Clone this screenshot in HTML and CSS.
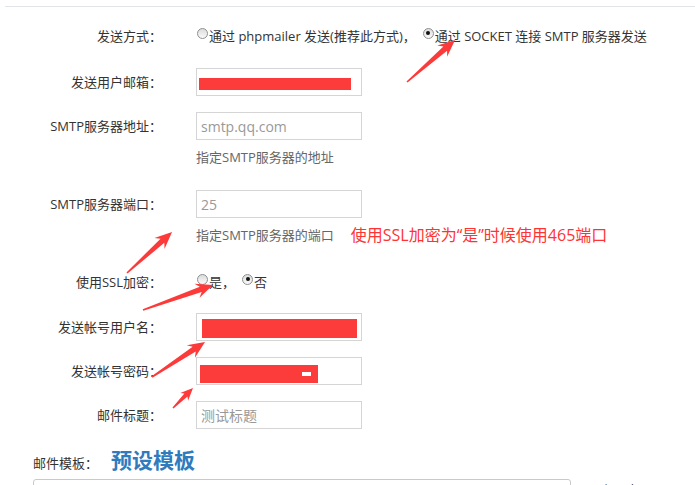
FILE: index.html
```html
<!DOCTYPE html>
<html lang="zh-CN">
<head>
<meta charset="utf-8">
<title>邮件设置</title>
<link rel="stylesheet" href="styles.css">
</head>
<body>
<div class="page">
  <div class="panel">
    <div class="row row-text row-method">
      <div class="lbl">发送方式<span class="colon">：</span></div>
      <div class="field opts">
        <span class="opt"><span class="radio"></span>通过 phpmailer 发送(推荐此方式)，</span>
        <span class="opt opt-2"><span class="radio on"></span>通过 SOCKET 连接 SMTP 服务器发送</span>
      </div>
    </div>

    <div class="row row-email">
      <div class="lbl">发送用户邮箱<span class="colon">：</span></div>
      <div class="field">
        <div class="input input-email"><span class="redact redact-email"></span></div>
      </div>
    </div>

    <div class="row row-host">
      <div class="lbl">SMTP服务器地址<span class="colon">：</span></div>
      <div class="field">
        <div class="input">smtp.qq.com</div>
        <div class="hint">指定SMTP服务器的地址</div>
      </div>
    </div>

    <div class="row row-port">
      <div class="lbl">SMTP服务器端口<span class="colon">：</span></div>
      <div class="field">
        <div class="input">25</div>
        <div class="hint hint-line">指定SMTP服务器的端口<span class="note">使用SSL加密为“是”时候使用465端口</span></div>
      </div>
    </div>

    <div class="row row-text row-ssl">
      <div class="lbl">使用SSL加密<span class="colon">：</span></div>
      <div class="field opts">
        <span class="opt"><span class="radio"></span>是，</span>
        <span class="opt opt-ssl2"><span class="radio on"></span>否</span>
      </div>
    </div>

    <div class="row row-user">
      <div class="lbl">发送帐号用户名<span class="colon">：</span></div>
      <div class="field">
        <div class="input input-user"><span class="redact redact-user"></span></div>
      </div>
    </div>

    <div class="row row-pass">
      <div class="lbl">发送帐号密码<span class="colon">：</span></div>
      <div class="field">
        <div class="input input-pass"><span class="redact redact-pass"><span class="dash"></span></span></div>
      </div>
    </div>

    <div class="row row-title">
      <div class="lbl">邮件标题<span class="colon">：</span></div>
      <div class="field">
        <div class="input">测试标题</div>
      </div>
    </div>

    <div class="tpl">
      <div class="tpl-head">
        <span class="tpl-lbl">邮件模板<span class="colon">：</span></span>
        <span class="tpl-name">预设模板</span>
      </div>
      <div class="tpl-body">
        <div class="editor">
          <div class="toolbar">
            <span class="sep sep-1"></span>
            <span class="sep sep-2"></span>
            <span class="sep sep-3"></span>
          </div>
        </div>
        <div class="side">取回上层密码</div>
      </div>
    </div>
  </div>

  <svg class="arrows" width="695" height="485" viewBox="0 0 695 485" aria-hidden="true">
    <g fill="#fc3a3a">
      <polygon transform="translate(407 82) rotate(-41.2)" points="0,-0.8 50.8,-2.8 46.8,-7.5 63.8,0 46.8,7.5 50.8,2.8 0,0.8"/>
      <polygon transform="translate(127 273) rotate(-42.3)" points="0,-0.8 47.9,-2.8 43.9,-7.5 60.9,0 43.9,7.5 47.9,2.8 0,0.8"/>
      <polygon transform="translate(143 310) rotate(-19.6)" points="0,-0.8 61.3,-2.8 57.3,-7.5 74.3,0 57.3,7.5 61.3,2.8 0,0.8"/>
      <polygon transform="translate(152 377) rotate(-33.4)" points="0,-0.8 50.5,-2.8 46.5,-7.5 63.5,0 46.5,7.5 50.5,2.8 0,0.8"/>
      <polygon transform="translate(173 408) rotate(-45)" points="0,-0.7 18.3,-2.2 15.8,-5.5 28.3,0 15.8,5.5 18.3,2.2 0,0.7"/>
    </g>
  </svg>
</div>
</body>
</html>
```

FILE: styles.css
```css
html, body {
  margin: 0;
  padding: 0;
}

body {
  width: 695px;
  height: 485px;
  overflow: hidden;
  background: #fff;
  color: #333;
  font-family: "Open Sans", "Noto Sans CJK SC", sans-serif;
  font-size: 13px;
}

.page {
  position: relative;
  height: 485px;
  padding-top: 6px;
  box-sizing: border-box;
}

.panel {
  margin-left: 5px;
  border-top: 1px solid #e1e5ea;
  padding-top: 19px;
}

.row {
  display: grid;
  grid-template-columns: 157px 1fr;
  column-gap: 34px;
  align-items: start;
}

.lbl {
  text-align: right;
  line-height: 28px;
  white-space: nowrap;
}

.colon {
  font-family: "Noto Sans CJK JP", "Noto Sans CJK SC", sans-serif;
}

.row-text .lbl,
.row-text .field {
  line-height: 20px;
}

.row-email { margin-top: 22px; }
.row-host  { margin-top: 16px; }
.row-port  { margin-top: 23px; }
.row-ssl   { margin-top: 27px; }
.row-user  { margin-top: 21px; }
.row-pass  { margin-top: 16px; }
.row-title { margin-top: 16px; }

.field {
  white-space: nowrap;
}

.opts {
  display: flex;
  align-items: center;
}

.opt {
  display: inline-flex;
  align-items: center;
}

.opt-2 { margin-left: 6px; }
.opt-ssl2 { margin-left: 6px; }

.radio {
  position: relative;
  display: inline-block;
  width: 9px;
  height: 9px;
  margin: 0 1px 0 1px;
  border: 1px solid #8f8f8f;
  border-radius: 50%;
  background: linear-gradient(#dcdcdc, #fafafa);
  transform: translateY(-3px);
  box-sizing: content-box;
}

.radio.on::after {
  content: "";
  position: absolute;
  left: 2.5px;
  top: 2.5px;
  width: 4px;
  height: 4px;
  border-radius: 50%;
  background: #111;
}

.input {
  display: flex;
  align-items: center;
  box-sizing: border-box;
  width: 166px;
  height: 28px;
  padding: 0 4px;
  border: 1px solid #d5d5d5;
  background: #fff;
  color: #999;
  font-size: 14px;
}

.hint {
  margin-top: 7px;
  line-height: 20px;
  color: #666;
}

.hint-line {
  display: flex;
  align-items: center;
}

.note {
  margin-left: 17px;
  color: #f33;
  font-size: 16px;
}

.redact {
  display: block;
  background: #fc3b3b;
}

.input-email { padding-left: 2px; }
.redact-email {
  width: 152px;
  height: 12px;
  margin-top: 4px;
}

.input-user { padding-left: 5px; }
.redact-user {
  width: 155px;
  height: 19px;
  margin-top: 3px;
}

.input-pass { padding-left: 3px; }
.redact-pass {
  display: flex;
  align-items: center;
  justify-content: flex-end;
  width: 118px;
  height: 18px;
  margin-top: 5px;
  padding-right: 7px;
  box-sizing: border-box;
}

.dash {
  display: block;
  width: 9px;
  height: 4px;
  background: #fff;
}

.tpl {
  margin-top: 18px;
  padding-left: 28px;
}

.tpl-head {
  display: flex;
  align-items: baseline;
  gap: 13px;
  line-height: 26px;
}

.tpl-name {
  color: #2e7bbd;
  font-size: 21px;
  font-weight: 700;
}

.tpl-body {
  display: flex;
  align-items: flex-start;
  margin-top: 3px;
}

.editor {
  width: 538px;
  height: 40px;
  border: 1px solid #c9c9c9;
  border-radius: 3px;
  box-sizing: border-box;
}

.toolbar {
  position: relative;
  height: 100%;
}

.sep {
  position: absolute;
  top: 5px;
  width: 1px;
  height: 12px;
  background: #ddd;
}

.sep-1 { left: 32px; }
.sep-2 { left: 89px; }
.sep-3 { left: 398px; }

.side {
  margin-left: 3px;
  margin-top: 1px;
  line-height: 20px;
  color: #333;
}

.arrows {
  position: absolute;
  left: 0;
  top: 0;
  pointer-events: none;
}
```
